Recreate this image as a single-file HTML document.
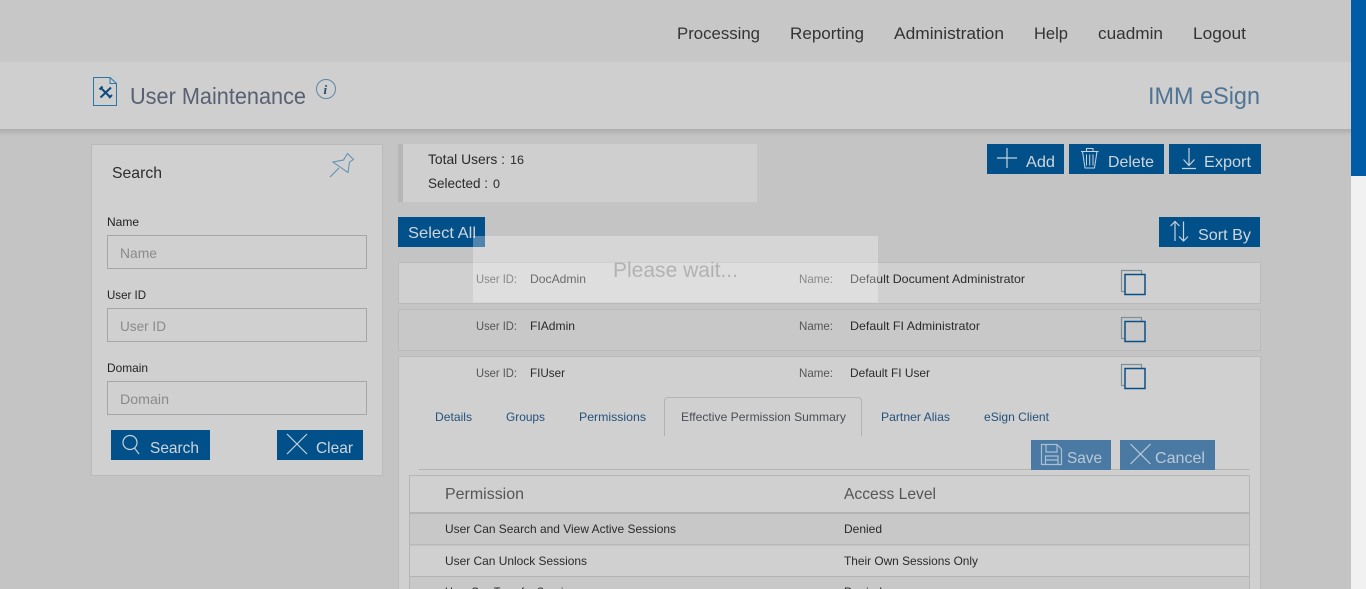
<!DOCTYPE html>
<html><head><meta charset="utf-8"><title>User Maintenance</title>
<style>
html,body{margin:0;padding:0;width:1366px;height:589px;overflow:hidden;background:#c4c4c4}
svg{display:block;font-family:"Liberation Sans",sans-serif}
text{white-space:pre}
.d{fill:#2a2a2a;font-size:12px}
.m{fill:#555;font-size:12px}
.n{fill:#333;font-size:17px}
.w{fill:#d0d5da;font-size:16px}
.t{fill:#23527c;font-size:12px}
.l{fill:#222;font-size:12px}
.p{fill:#8a8a8a;font-size:14px}
.i{fill:none;stroke:#c6d2dc;stroke-width:1.2}
</style></head><body>
<svg width="1366" height="589" viewBox="0 0 1366 589" xmlns="http://www.w3.org/2000/svg">
<defs>
<linearGradient id="sh" x1="0" y1="0" x2="0" y2="1"><stop offset="0" stop-color="#adadad"/><stop offset="1" stop-color="#c4c4c4"/></linearGradient>
</defs>
<rect width="1366" height="589" fill="#c4c4c4"/>
<rect width="1351" height="62" fill="#c7c7c7"/>
<rect y="129" width="1351" height="7" fill="url(#sh)"/>
<rect y="62" width="1351" height="67" fill="#cfcfcf"/>
<rect x="1351" y="0" width="15" height="589" fill="#f1f1f1"/>
<rect x="1351" y="0" width="15" height="176" fill="#005ca6"/>

<text class="n" x="677" y="39" textLength="83" lengthAdjust="spacingAndGlyphs">Processing</text>
<text class="n" x="790" y="39" textLength="74" lengthAdjust="spacingAndGlyphs">Reporting</text>
<text class="n" x="894" y="39" textLength="110" lengthAdjust="spacingAndGlyphs">Administration</text>
<text class="n" x="1034" y="39" textLength="34" lengthAdjust="spacingAndGlyphs">Help</text>
<text class="n" x="1098" y="39" textLength="65" lengthAdjust="spacingAndGlyphs">cuadmin</text>
<text class="n" x="1193" y="39" textLength="53" lengthAdjust="spacingAndGlyphs">Logout</text>

<path d="M93.500 77.500H110L116.500 83.500V105.500H93.500Z M110 77.500V83.500H116.500" fill="none" stroke="#2d76a8" stroke-width="1"/>
<path d="M100.500 87.500L110.500 97.500M111 87.500L100.500 97.500M99.500 89.500L102.500 86.500M109 98L112 95" stroke="#0b4a7d" stroke-width="2" fill="none"/>
<text x="130" y="104" font-size="23" fill="#5a6072" textLength="176" lengthAdjust="spacingAndGlyphs">User Maintenance</text>
<circle cx="326" cy="89" r="9.500" fill="none" stroke="#5d87a8" stroke-width="1"/>
<text x="323.500" y="94" font-size="13" font-style="italic" font-weight="bold" fill="#1a4d78" font-family="Liberation Serif">i</text>
<text x="1148" y="104" font-size="24" fill="#4f7494" textLength="112" lengthAdjust="spacingAndGlyphs">IMM eSign</text>

<rect x="91.500" y="144.500" width="291" height="331" fill="#d0d0d0" stroke="#bababa"/>
<text x="112" y="178" font-size="16" fill="#2d2d2d" textLength="50" lengthAdjust="spacingAndGlyphs">Search</text>
<path d="M347.500 153.500L353.500 159.500L349.500 162L348 172.500L333 162L343.500 160ZM339 168L330 177" fill="none" stroke="#5b8fb3" stroke-width="1"/>
<text class="l" x="107" y="226" textLength="32" lengthAdjust="spacingAndGlyphs">Name</text>
<rect x="107.500" y="235.500" width="259" height="33" fill="none" stroke="#a6a6a6" stroke-width="1"/>
<text class="p" x="120" y="258" textLength="37" lengthAdjust="spacingAndGlyphs">Name</text>
<text class="l" x="107" y="299" textLength="39" lengthAdjust="spacingAndGlyphs">User ID</text>
<rect x="107.500" y="308.500" width="259" height="33" fill="none" stroke="#a6a6a6" stroke-width="1"/>
<text class="p" x="120" y="331" textLength="46" lengthAdjust="spacingAndGlyphs">User ID</text>
<text class="l" x="107" y="372" textLength="41" lengthAdjust="spacingAndGlyphs">Domain</text>
<rect x="107.500" y="381.500" width="259" height="33" fill="none" stroke="#a6a6a6" stroke-width="1"/>
<text class="p" x="120" y="404" textLength="49" lengthAdjust="spacingAndGlyphs">Domain</text>

<rect x="111" y="430" width="99" height="30" fill="#02508a"/>
<circle cx="130" cy="442.500" r="7" class="i"/><path d="M134.500 448L139 454" class="i"/>
<text class="w" x="150" y="453" textLength="49" lengthAdjust="spacingAndGlyphs">Search</text>
<rect x="277" y="430" width="86" height="30" fill="#02508a"/>
<path d="M287 434L307 454M307 434L287 454" class="i"/>
<text class="w" x="316" y="453" textLength="37" lengthAdjust="spacingAndGlyphs">Clear</text>

<rect x="398" y="144" width="359" height="58" fill="#cfcfcf"/>
<rect x="398" y="144" width="5" height="58" fill="#b6b6b6"/>
<text class="d" x="428" y="164" style="font-size:14px" textLength="77" lengthAdjust="spacingAndGlyphs">Total Users :</text>
<text class="d" x="510" y="164" textLength="14" lengthAdjust="spacingAndGlyphs">16</text>
<text class="d" x="428" y="188" style="font-size:14px" textLength="60" lengthAdjust="spacingAndGlyphs">Selected :</text>
<text class="d" x="493" y="188" textLength="7" lengthAdjust="spacingAndGlyphs">0</text>

<rect x="987" y="144" width="77" height="30" fill="#02508a"/>
<path d="M997 158H1017M1007 148V168" class="i"/>
<text class="w" x="1026" y="167" textLength="29" lengthAdjust="spacingAndGlyphs">Add</text>
<rect x="1069" y="144" width="95" height="30" fill="#02508a"/>
<path d="M1081 151.500H1098.500M1086.500 151.500V148.500H1093V151.500M1082.500 151.500L1085 168H1094.500L1097 151.500M1086.500 154.500V165.500M1089.700 154.500V165.500M1093 154.500V165.500" class="i" style="stroke-width:1"/>
<text class="w" x="1108" y="167" textLength="46" lengthAdjust="spacingAndGlyphs">Delete</text>
<rect x="1169" y="144" width="92" height="30" fill="#02508a"/>
<path d="M1189 148V165M1183.500 159.500L1189 165.500L1194.500 159.500M1182 168.500H1196" class="i"/>
<text class="w" x="1204" y="167" textLength="47" lengthAdjust="spacingAndGlyphs">Export</text>

<rect x="398" y="217" width="87" height="30" fill="#02508a"/>
<text class="w" x="408" y="238" textLength="68" lengthAdjust="spacingAndGlyphs">Select All</text>
<rect x="1159" y="217" width="101" height="30" fill="#02508a"/>
<path d="M1175 241V221.500M1170.500 226L1175 221.500L1179.500 226M1183.500 221.500V241M1179 236.500L1183.500 241L1188 236.500" class="i"/>
<text class="w" x="1198" y="240" textLength="53" lengthAdjust="spacingAndGlyphs">Sort By</text>

<rect x="398.500" y="262.500" width="862" height="41" fill="#d0d0d0" stroke="#bababa"/>
<rect x="398.500" y="309.500" width="862" height="41" fill="#c8c8c8" stroke="#bababa"/>
<rect x="398.500" y="356.500" width="862" height="240" fill="#d0d0d0" stroke="#bababa"/>

<text class="m" x="476" y="283" textLength="41" lengthAdjust="spacingAndGlyphs">User ID:</text>
<text class="d" x="530" y="283" textLength="56" lengthAdjust="spacingAndGlyphs">DocAdmin</text>
<text class="m" x="799" y="283" textLength="34" lengthAdjust="spacingAndGlyphs">Name:</text>
<text class="d" x="850" y="283" textLength="175" lengthAdjust="spacingAndGlyphs">Default Document Administrator</text>

<text class="m" x="476" y="330" textLength="41" lengthAdjust="spacingAndGlyphs">User ID:</text>
<text class="d" x="530" y="330" textLength="45" lengthAdjust="spacingAndGlyphs">FIAdmin</text>
<text class="m" x="799" y="330" textLength="34" lengthAdjust="spacingAndGlyphs">Name:</text>
<text class="d" x="850" y="330" textLength="130" lengthAdjust="spacingAndGlyphs">Default FI Administrator</text>

<text class="m" x="476" y="377" textLength="41" lengthAdjust="spacingAndGlyphs">User ID:</text>
<text class="d" x="530" y="377" textLength="35" lengthAdjust="spacingAndGlyphs">FIUser</text>
<text class="m" x="799" y="377" textLength="34" lengthAdjust="spacingAndGlyphs">Name:</text>
<text class="d" x="850" y="377" textLength="80" lengthAdjust="spacingAndGlyphs">Default FI User</text>

<g fill="none">
<path d="M1124.500 291.500H1121.500V270.500H1141.500V274.500" stroke="#7f8f95" stroke-width="1.200"/>
<rect x="1125" y="274.500" width="20" height="20" stroke="#0b4f87" stroke-width="1.500"/>
<path d="M1124.500 338.500H1121.500V317.500H1141.500V321.500" stroke="#7f8f95" stroke-width="1.200"/>
<rect x="1125" y="321.500" width="20" height="20" stroke="#0b4f87" stroke-width="1.500"/>
<path d="M1124.500 385.500H1121.500V364.500H1141.500V368.500" stroke="#7f8f95" stroke-width="1.200"/>
<rect x="1125" y="368.500" width="20" height="20" stroke="#0b4f87" stroke-width="1.500"/>
</g>

<text class="t" x="435" y="421" textLength="37" lengthAdjust="spacingAndGlyphs">Details</text>
<text class="t" x="506" y="421" textLength="39" lengthAdjust="spacingAndGlyphs">Groups</text>
<text class="t" x="579" y="421" textLength="67" lengthAdjust="spacingAndGlyphs">Permissions</text>
<path d="M664.500 436V401.500Q664.500 397.500 668.500 397.500H857.500Q861.500 397.500 861.500 401.500V436" fill="none" stroke="#b3b3b3"/>
<text x="681" y="421" font-size="12" fill="#4a4f55" textLength="165" lengthAdjust="spacingAndGlyphs">Effective Permission Summary</text>
<text class="t" x="881" y="421" textLength="69" lengthAdjust="spacingAndGlyphs">Partner Alias</text>
<text class="t" x="984" y="421" textLength="65" lengthAdjust="spacingAndGlyphs">eSign Client</text>

<path d="M419 469.500H1250" stroke="#b5b5b5"/>
<rect x="1031" y="440" width="80" height="30" fill="#4a7aa3"/>
<path d="M1041.500 444.500H1057L1061.500 449V464.500H1041.500ZM1046 444.500V452H1057V444.500M1045.500 464.500V456H1058V464.500M1045.500 460H1058" fill="none" stroke="#a9bfd2" stroke-width="1.200"/>
<text x="1067" y="463" font-size="16" fill="#b9c9d7" textLength="35" lengthAdjust="spacingAndGlyphs">Save</text>
<rect x="1120" y="440" width="95" height="30" fill="#4a7aa3"/>
<path d="M1130.500 444L1150.500 464M1150.500 444L1130.500 464" fill="none" stroke="#b9c9d7" stroke-width="1.200"/>
<text x="1155" y="463" font-size="16" fill="#b9c9d7" textLength="50" lengthAdjust="spacingAndGlyphs">Cancel</text>

<rect x="409.500" y="475.500" width="840" height="120" fill="#d0d0d0" stroke="#b5b5b5"/>
<text x="445" y="499" font-size="16" fill="#555" textLength="79" lengthAdjust="spacingAndGlyphs">Permission</text>
<text x="844" y="499" font-size="16" fill="#555" textLength="92" lengthAdjust="spacingAndGlyphs">Access Level</text>
<rect x="410" y="512" width="839" height="2" fill="#b4b4b4"/>
<rect x="410" y="514" width="839" height="30" fill="#c8c8c8"/>
<rect x="410" y="544" width="839" height="1.500" fill="#b8b8b8"/>
<rect x="410" y="576" width="839" height="1.500" fill="#b4b4b4"/>
<rect x="410" y="577" width="839" height="12" fill="#c8c8c8"/>
<text class="d" x="445" y="533" textLength="231" lengthAdjust="spacingAndGlyphs">User Can Search and View Active Sessions</text>
<text class="d" x="844" y="533" textLength="38" lengthAdjust="spacingAndGlyphs">Denied</text>
<text class="d" x="445" y="565" textLength="142" lengthAdjust="spacingAndGlyphs">User Can Unlock Sessions</text>
<text class="d" x="844" y="565" textLength="134" lengthAdjust="spacingAndGlyphs">Their Own Sessions Only</text>
<text class="d" x="445" y="596" textLength="136" lengthAdjust="spacingAndGlyphs">User Can Transfer Sessions</text>
<text class="d" x="844" y="596" textLength="38" lengthAdjust="spacingAndGlyphs">Denied</text>

<rect x="473" y="236" width="405" height="66.500" fill="#fff" fill-opacity=".3"/>
<text x="613" y="277" font-size="21" fill="#b2b2b2" textLength="125" lengthAdjust="spacingAndGlyphs">Please wait...</text>
</svg>
</body></html>
